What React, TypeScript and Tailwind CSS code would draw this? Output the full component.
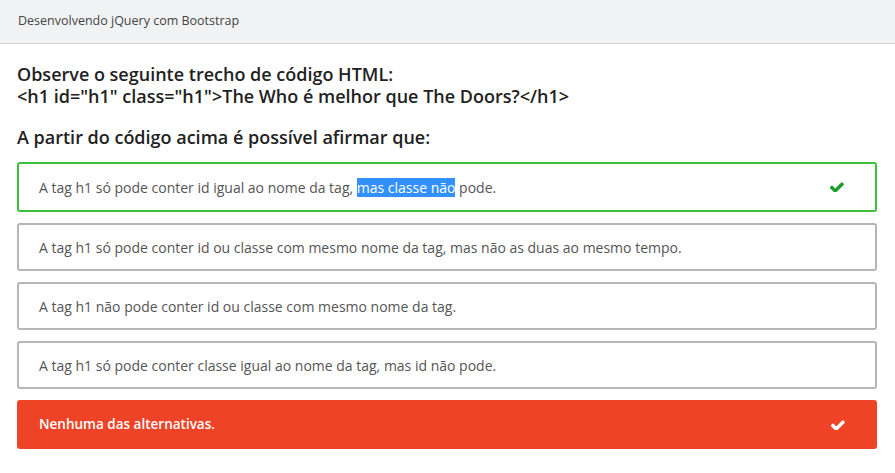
const options = [
  'A tag h1 só pode conter id ou classe com mesmo nome da tag, mas não as duas ao mesmo tempo.',
  'A tag h1 não pode conter id ou classe com mesmo nome da tag.',
  'A tag h1 só pode conter classe igual ao nome da tag, mas id não pode.',
];

function CheckIcon({ className }: { className?: string }) {
  return (
    <svg viewBox="140 300 1540 1100" className={className} fill="currentColor" aria-hidden="true">
      <path d="M1671 566q0 40-28 68l-724 724-136 136q-28 28-68 28t-68-28l-136-136-362-362q-28-28-28-68t28-68l136-136q28-28 68-28t68 28l294 295 656-657q28-28 68-28t68 28l136 136q28 28 28 68z" />
    </svg>
  );
}

export default function App() {
  return (
    <div className="w-[895px] h-[473px] bg-white overflow-hidden text-[#333] font-['Open_Sans',sans-serif]">
      <header className="h-[44px] bg-[#f1f2f3] border-b border-[#cfd1d3] flex items-center px-[18px] text-[12.5px] text-[#444]">
        Desenvolvendo jQuery com Bootstrap
      </header>

      <main className="px-[17px] pt-[19px]">
        <h2 className="text-[18px] font-semibold leading-[22px] text-[#222]">
          Observe o seguinte trecho de código HTML:
          <br />
          {'<h1 id="h1" class="h1">The Who é melhor que The Doors?</h1>'}
        </h2>
        <h3 className="mt-[19px] text-[18px] font-semibold leading-[22px] text-[#222]">
          A partir do código acima é possível afirmar que:
        </h3>

        <div className="mt-[14px] flex flex-col gap-[11px] w-[860px]">
          <div className="h-[50px] border-2 border-[#3cbf3c] rounded-[3px] flex items-center justify-between pl-[20px] pr-[31px] text-[14px] text-[#555]">
            <span>
              A tag h1 só pode conter id igual ao nome da tag,{' '}
              <span className="bg-[#3390ff] text-white">mas classe não</span> pode.
            </span>
            <CheckIcon className="w-[14px] h-[10px] text-[#1f9d2c]" />
          </div>

          {options.map((text) => (
            <div
              key={text}
              className="h-[48px] border-2 border-[#b4b6b9] rounded-[3px] flex items-center pl-[20px] text-[14px] text-[#555]"
            >
              {text}
            </div>
          ))}

          <div className="h-[49px] bg-[#ee4326] rounded-[3px] flex items-center justify-between pl-[22px] pr-[32px] text-[13.5px] font-semibold text-white">
            <span>Nenhuma das alternativas.</span>
            <CheckIcon className="w-[14px] h-[10px] text-white" />
          </div>
        </div>
      </main>
    </div>
  );
}
